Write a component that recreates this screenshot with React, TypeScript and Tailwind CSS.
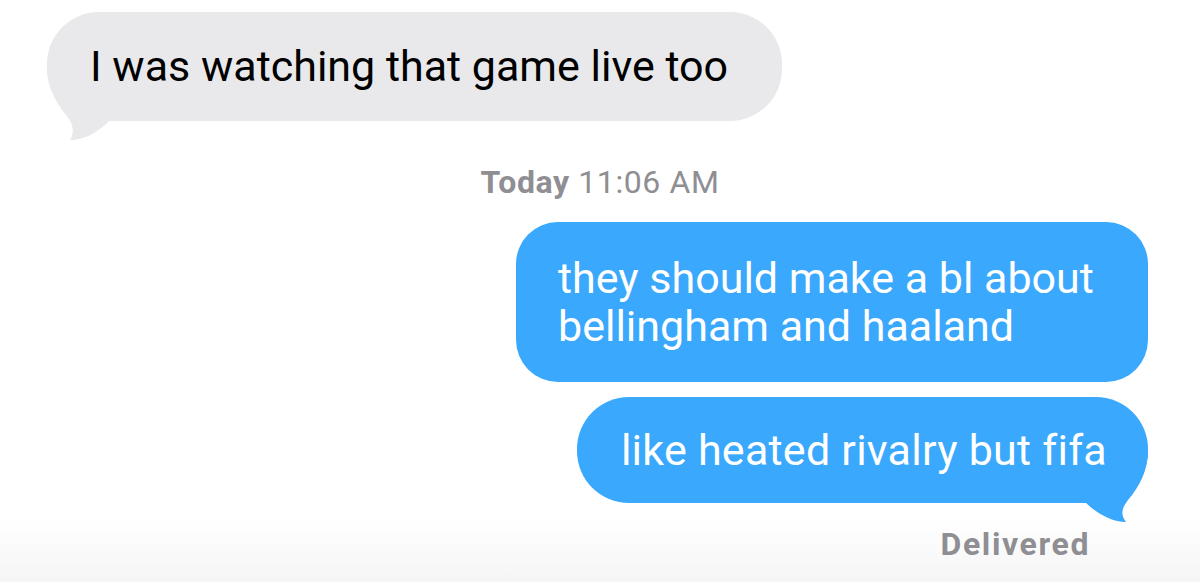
const font = { fontFamily: '"Roboto", "Inter", sans-serif' }

function GrayTail() {
  return (
    <svg className="absolute left-0 top-[54px]" width="100" height="80" viewBox="0 0 100 80">
      <path
        d="M0 0 C0 20 8 36 20 50 C26 58 28 66 23 74 C37 74 52 66 62 55 L100 55 L100 0 Z"
        fill="#e9e9eb"
      />
    </svg>
  )
}

function BlueTail() {
  return (
    <svg className="absolute right-0 top-[53px]" width="100" height="80" viewBox="0 0 100 80">
      <path
        d="M100 0 C100 20 92 36 80 50 C74 58 72 64 78 72 C64 72 48 63 38 53 L0 53 L0 0 Z"
        fill="#3aa8fc"
      />
    </svg>
  )
}

export default function App() {
  return (
    <div
      className="relative w-[1200px] h-[582px] overflow-hidden bg-white bg-gradient-to-b from-white from-[89%] to-[#f5f5f5]"
      style={font}
    >
      <div className="flex flex-col">
        {/* incoming */}
        <div className="ml-[47px] mt-[12px] self-start relative">
          <div className="relative z-10 h-[109px] flex items-center pl-[43px] pr-[54px] rounded-[52px] bg-[#e9e9eb] text-[43px] text-black">
            I was watching that game live too
          </div>
          <GrayTail />
        </div>

        {/* timestamp */}
        <div className="mt-[46px] self-center text-[32px] leading-[30px] tracking-[0.6px] text-[#8e8e93]">
          <span className="font-bold">Today</span> 11:06 AM
        </div>

        {/* outgoing */}
        <div className="mr-[52px] mt-[25px] self-end h-[160px] w-[632px] flex flex-col justify-center pl-[42px] rounded-[42px] bg-[#3aa8fc] text-white text-[43px] leading-[48px]">
          <span>they should make a bl about</span>
          <span>bellingham and haaland</span>
        </div>

        <div className="mr-[52px] mt-[15px] self-end relative">
          <div className="relative z-10 h-[106px] flex items-center pl-[44px] pr-[41px] rounded-[52px] bg-[#3aa8fc] text-white text-[43px] tracking-[0.25px]">
            like heated rivalry but fifa
          </div>
          <BlueTail />
        </div>

        <div className="mr-[110px] mt-[26px] self-end text-[32px] leading-[30px] tracking-[1.6px] font-bold text-[#8e8e93]">
          Delivered
        </div>
      </div>
    </div>
  )
}
